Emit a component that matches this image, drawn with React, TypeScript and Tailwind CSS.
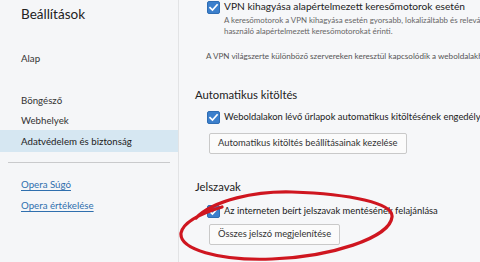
function Check() {
  return (
    <span className="flex h-[13px] w-[13px] shrink-0 items-center justify-center rounded-[2px] border border-[#2f6db3] bg-[#3b7fcc]">
      <svg width="11" height="11" viewBox="0 0 12 12" fill="none">
        <path d="M2.2 6.2 L4.9 8.9 L9.9 3.2" stroke="#fff" strokeWidth="1.8" strokeLinecap="square" />
      </svg>
    </span>
  );
}

function CheckRow({ label, big }: { label: string; big?: boolean }) {
  return (
    <div
      className={
        big
          ? 'flex h-[14px] items-center gap-[4px] whitespace-nowrap pl-[12px] text-[10.2px] text-[#222]'
          : 'flex h-[16px] items-center gap-[4px] whitespace-nowrap pl-[12px] text-[9.4px] text-[#222]'
      }
    >
      <Check />
      <span>{label}</span>
    </div>
  );
}

function Button({ label }: { label: string }) {
  return (
    <div className="flex pl-[14px]">
      <div className="flex h-[21px] items-center whitespace-nowrap rounded-[2px] border border-[#c9c9c9] bg-[#fbfbfb] px-[8px] text-[9.4px] text-[#333]">
        {label}
      </div>
    </div>
  );
}

const navItems = ['Böngésző', 'Webhelyek'];

export default function App() {
  return (
    <div className="relative flex h-[262px] w-[480px] overflow-hidden bg-[#f6f7f9] font-['Lato',sans-serif]">
      {/* sidebar */}
      <aside className="w-[179px] shrink-0 border-r border-[#e2e3e5] bg-[#f5f6f8] text-[9.7px] text-[#333]">
        <div className="h-[28px] pl-[21px] text-[13.5px] leading-[28px] text-[#222]">Beállítások</div>
        <div className="mt-[20px] h-[20px] pl-[21px] leading-[20px]">Alap</div>
        <div className="mt-[22px]">
          {navItems.map((item) => (
            <div key={item} className="h-[20px] pl-[21px] leading-[20px]">
              {item}
            </div>
          ))}
        </div>
        <div className="h-[22px] bg-[#d6e7f2] pl-[21px] leading-[22px] text-[#222]">Adatvédelem és biztonság</div>
        <div className="mx-[8px] mt-[10px] border-t border-[#c9cacc]" />
        <div className="mt-[11px] flex flex-col gap-[1px] pl-[21px] text-[#2f6fae]">
          <a className="h-[20px] leading-[20px] underline decoration-1 underline-offset-2">Opera Súgó</a>
          <a className="h-[20px] leading-[20px] underline decoration-1 underline-offset-2">Opera értékelése</a>
        </div>
      </aside>

      {/* main */}
      <main className="min-w-0 flex-1 overflow-hidden pl-[16px] text-[#222]">
        <CheckRow big label="VPN kihagyása alapértelmezett keresőmotorok esetén" />
        <div className="mt-[1px] whitespace-nowrap pl-[29px] text-[7.9px] leading-[11px] text-[#666]">
          <div>A keresőmotorok a VPN kihagyása esetén gyorsabb, lokalizáltabb és relevánsabb találatokat adnak.</div>
          <div>használó alapértelmezett keresőmotorokat érinti.</div>
        </div>
        <div className="mt-[13px] h-[12px] whitespace-nowrap pl-[11px] text-[8.1px] leading-[12px] text-[#555]">
          A VPN világszerte különböző szervereken keresztül kapcsolódik a weboldalakhoz.
        </div>

        <div className="mt-[23px] h-[20px] text-[11.3px] leading-[20px]">Automatikus kitöltés</div>
        <div className="mt-[4px]">
          <CheckRow label="Weboldalakon lévő űrlapok automatikus kitöltésének engedélyezése" />
        </div>
        <div className="mt-[8px]">
          <Button label="Automatikus kitöltés beállításainak kezelése" />
        </div>

        <div className="mt-[23px] h-[20px] text-[11.3px] leading-[20px]">Jelszavak</div>
        <div className="mt-[6px]">
          <CheckRow label="Az interneten beírt jelszavak mentésének felajánlása" />
        </div>
        <div className="mt-[5px]">
          <Button label="Összes jelszó megjelenítése" />
        </div>
      </main>

      {/* red hand-drawn annotation */}
      <svg className="pointer-events-none absolute left-0 top-0" width="480" height="262" viewBox="0 0 480 262" fill="none">
        <path
          d="M196 218 C214 200 255 191 292 192 C350 194 394 203 392 217 C390 238 330 257 272 259 C218 261 179 249 181 233 C183 223 199 214 222 207"
          stroke="#cf1620"
          strokeWidth="3.2"
          strokeLinecap="round"
        />
      </svg>
    </div>
  );
}
